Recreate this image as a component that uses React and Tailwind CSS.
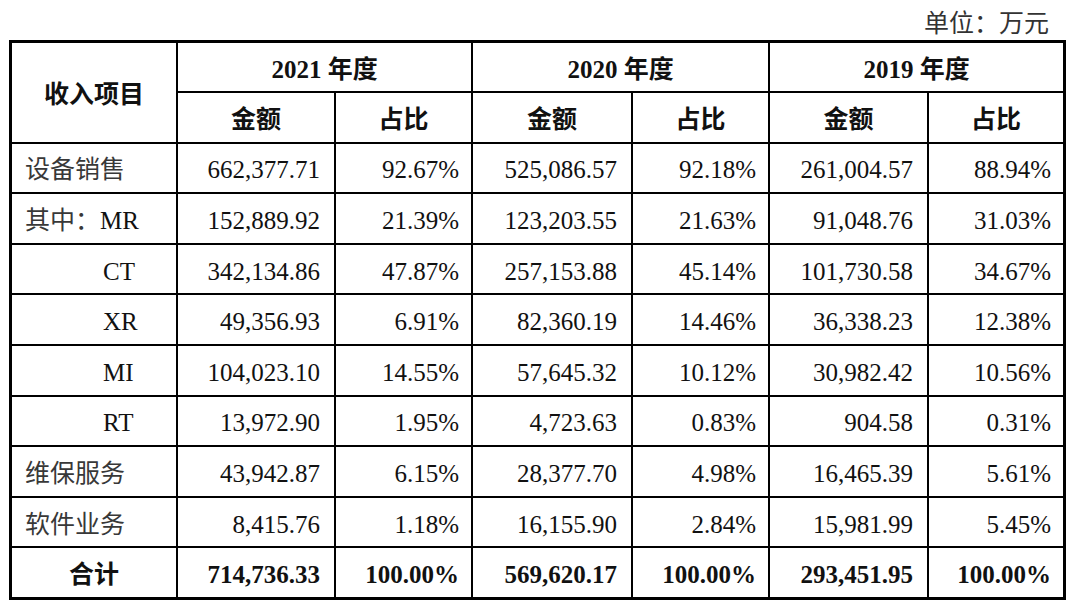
const ROWS = [
  { label: '设备销售', indent: false, v: ['662,377.71', '92.67%', '525,086.57', '92.18%', '261,004.57', '88.94%'] },
  { label: '其中：', code: 'MR', indent: false, v: ['152,889.92', '21.39%', '123,203.55', '21.63%', '91,048.76', '31.03%'] },
  { code: 'CT', indent: true, v: ['342,134.86', '47.87%', '257,153.88', '45.14%', '101,730.58', '34.67%'] },
  { code: 'XR', indent: true, v: ['49,356.93', '6.91%', '82,360.19', '14.46%', '36,338.23', '12.38%'] },
  { code: 'MI', indent: true, v: ['104,023.10', '14.55%', '57,645.32', '10.12%', '30,982.42', '10.56%'] },
  { code: 'RT', indent: true, v: ['13,972.90', '1.95%', '4,723.63', '0.83%', '904.58', '0.31%'] },
  { label: '维保服务', indent: false, v: ['43,942.87', '6.15%', '28,377.70', '4.98%', '16,465.39', '5.61%'] },
  { label: '软件业务', indent: false, v: ['8,415.76', '1.18%', '16,155.90', '2.84%', '15,981.99', '5.45%'] },
];

const TOTAL = ['714,736.33', '100.00%', '569,620.17', '100.00%', '293,451.95', '100.00%'];

const YEARS = ['2021', '2020', '2019'];

// pt nudges the serif digits down to sit where the PDF render has them
const cell = 'border-2 border-black p-0 pt-[4px] align-middle';

export default function App() {
  return (
    <div
      className="min-h-screen w-[1080px] bg-white pl-[9px] text-[#111]"
      style={{ fontFamily: '"Liberation Serif", "Noto Sans CJK SC", serif' }}
    >
      <div className="flex h-[40px] w-[1057px] items-end justify-end pb-[4px] pr-[17px] text-[25px] leading-none text-[#333]">
        单位：万元
      </div>
      <table className="w-[1057px] table-fixed border-collapse border-[3px] border-black text-[25px] leading-none">
        <colgroup>
          <col className="w-[166.5px]" />
          <col className="w-[158px]" />
          <col className="w-[137px]" />
          <col className="w-[160px]" />
          <col className="w-[137px]" />
          <col className="w-[159px]" />
          <col className="w-[136.5px]" />
        </colgroup>
        <thead>
          <tr className="h-[50.6px]">
            <th rowSpan={2} className={`${cell} text-center font-bold`}>
              收入项目
            </th>
            {YEARS.map((y) => (
              <th key={y} colSpan={2} className={`${cell} text-center font-bold`}>
                {y} 年度
              </th>
            ))}
          </tr>
          <tr className="h-[50.6px]">
            {YEARS.map((y) => [
              <th key={`${y}-a`} className={`${cell} text-center font-bold`}>
                金额
              </th>,
              <th key={`${y}-b`} className={`${cell} text-center font-bold`}>
                占比
              </th>,
            ])}
          </tr>
        </thead>
        <tbody>
          {ROWS.map((row) => (
            <tr key={row.label || row.code} className="h-[50.6px]">
              <td className={`${cell} text-left ${row.indent ? 'pl-[91px]' : 'pl-[13px]'}`}>
                {row.label && <span className="text-[#383838]">{row.label}</span>}
                {row.code}
              </td>
              {row.v.map((val, i) => (
                <td key={i} className={`${cell} text-right ${i % 2 === 0 ? 'pr-[14px]' : 'pr-[12px]'}`}>
                  {val}
                </td>
              ))}
            </tr>
          ))}
          <tr className="h-[50.6px]">
            <td className={`${cell} text-center font-bold`}>合计</td>
            {TOTAL.map((val, i) => (
              <td key={i} className={`${cell} text-right font-bold ${i % 2 === 0 ? 'pr-[14px]' : 'pr-[12px]'}`}>
                {val}
              </td>
            ))}
          </tr>
        </tbody>
      </table>
    </div>
  );
}
